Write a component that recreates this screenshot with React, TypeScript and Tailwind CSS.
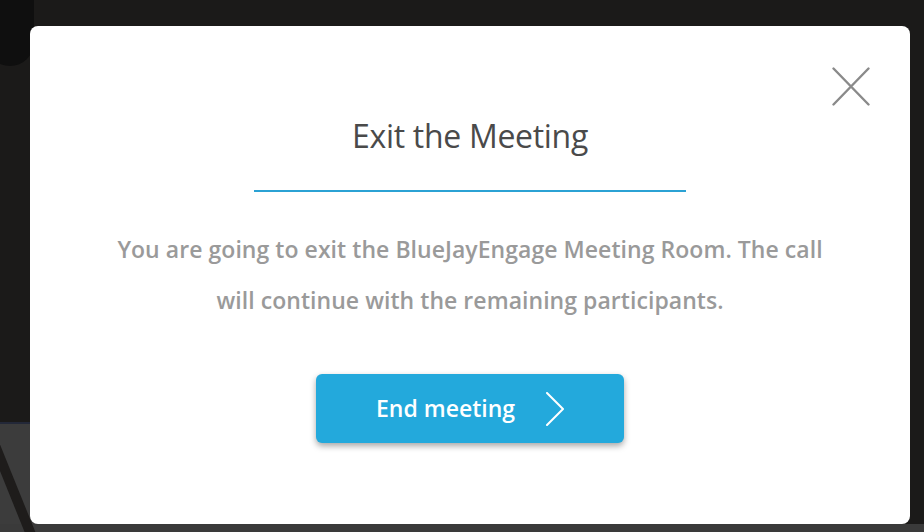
import React from "react";

function CloseIcon() {
  return (
    <svg width="38" height="39" viewBox="0 0 38 39" fill="none">
      <path d="M1.5 1.5L36.5 37.5M36.5 1.5L1.5 37.5" stroke="#8a8a8a" strokeWidth="2.4" strokeLinecap="round" />
    </svg>
  );
}

function Chevron() {
  return (
    <svg width="18" height="34" viewBox="0 0 18 34" fill="none">
      <path d="M1 1L17 17L1 33" stroke="#ffffff" strokeWidth="2" strokeLinecap="round" strokeLinejoin="round" />
    </svg>
  );
}

export default function App() {
  return (
    <div
      className="relative w-[924px] h-[532px] overflow-hidden bg-[#1b1a19] flex flex-col pl-[30px] pr-[14px] pt-[26px] pb-[8px]"
      style={{ fontFamily: '"Open Sans", "Liberation Sans", sans-serif' }}
    >
      {/* video tiles behind the dialog */}
      <div className="absolute -left-[14px] -top-[24px] w-[48px] h-[90px] rounded-full bg-[#0f0f0f]" />
      <div className="absolute left-0 top-[422px] w-[40px] h-[110px] bg-[#3c3c3c] border-t-2 border-[#232838]" />
      <div className="absolute left-0 top-[524px] w-[924px] h-[8px] bg-[#3a3a3a]" />
      <div className="absolute left-[6px] top-[430px] w-[10px] h-[110px] bg-[#1e1c1b] -rotate-[22deg]" />

      <div className="relative flex-1 rounded-lg bg-white flex flex-col items-center">
        <button className="absolute right-[40px] top-[41px]">
          <CloseIcon />
        </button>

        <h1 className="mt-[90px] text-[32px] leading-[40px] text-[#4a4a4a] font-medium tracking-[-0.3px]">
          Exit the Meeting
        </h1>
        <div className="mt-[34px] w-[432px] h-[2px] bg-[#2ba2d4]" />

        <p className="mt-[32px] text-[23px] leading-[51px] text-[#9a9a9a] font-semibold text-center tracking-[0.05px]">
          You are going to exit the BlueJayEngage Meeting Room. The call
          <br />
          will continue with the remaining participants.
        </p>

        <button className="mt-[48px] w-[308px] h-[69px] rounded-[6px] bg-[#23a9dc] shadow-[0_3px_6px_rgba(0,0,0,0.35)] flex items-center justify-center gap-[31px]">
          <span className="text-[23px] text-white font-semibold">End meeting</span>
          <Chevron />
        </button>
      </div>
    </div>
  );
}
